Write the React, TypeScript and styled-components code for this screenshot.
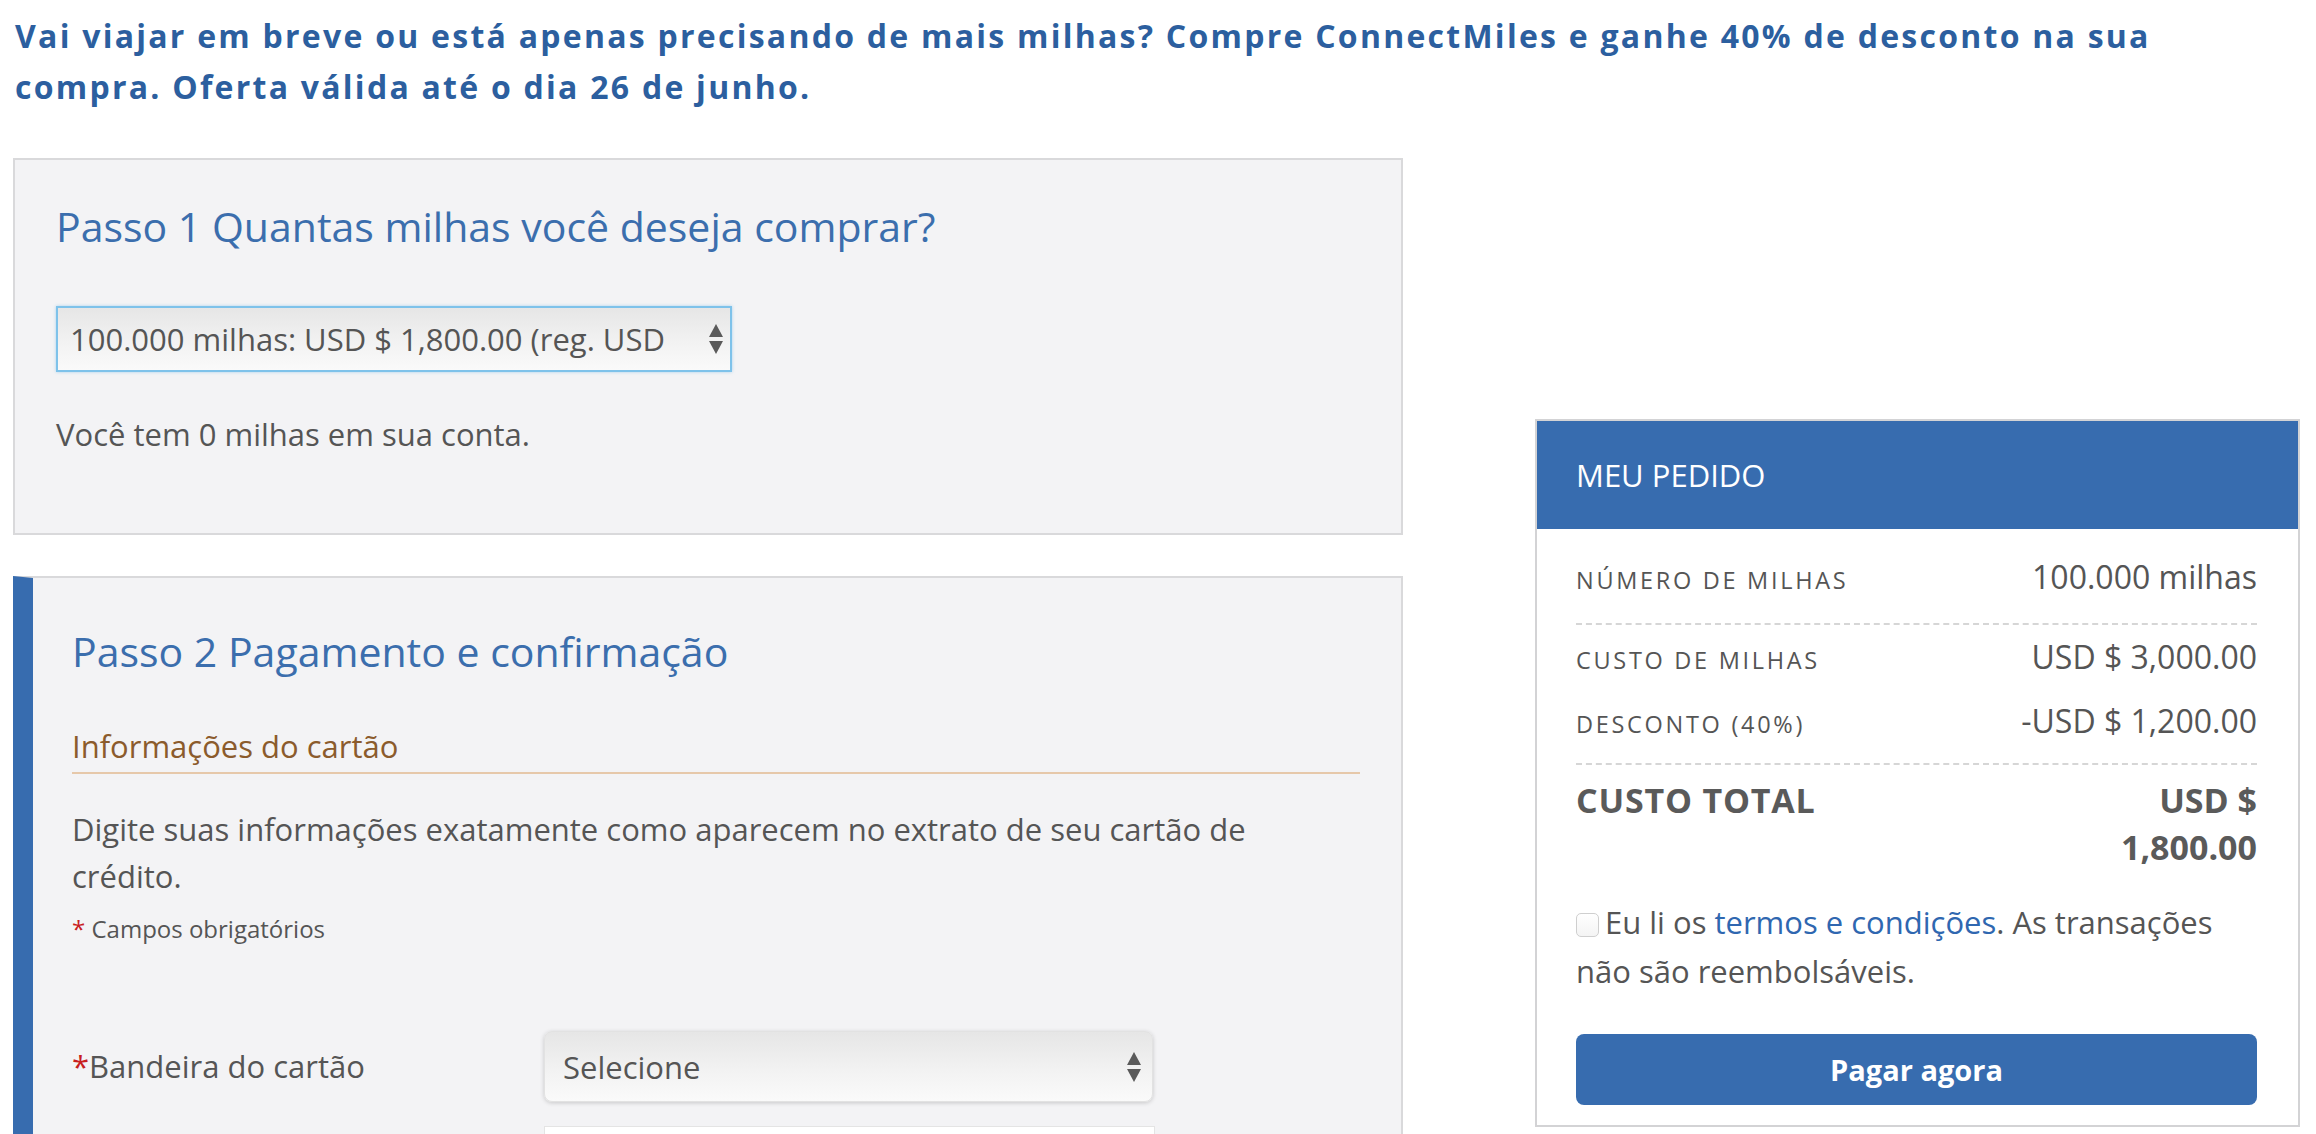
import React from "react";
import styled, { createGlobalStyle } from "styled-components";

const GlobalStyle = createGlobalStyle`
  html, body { margin: 0; padding: 0; background: #ffffff; }
  body { font-family: "Open Sans", "Liberation Sans", sans-serif; color: #555555; }
  * { box-sizing: border-box; }
`;

const Page = styled.div`
  padding: 10px 16px 0 13px;
  width: 2316px;
  height: 1134px;
  overflow: hidden;
`;

const Headline = styled.h1`
  margin: 0 0 0 2px;
  max-width: 2200px;
  font-size: 32px;
  font-weight: 700;
  line-height: 51px;
  letter-spacing: 2.25px;
  color: #2c5f9f;
`;

const Layout = styled.div`
  display: grid;
  grid-template-columns: 1390px 765px;
  column-gap: 132px;
  margin-top: 46px;
  align-items: start;
`;

const MainColumn = styled.div`
  display: flex;
  flex-direction: column;
  gap: 41px;
`;

const Panel = styled.section<{ $active?: boolean }>`
  background: #f3f3f5;
  border: 2px solid #d9d9db;
  border-left: ${(p) => (p.$active ? "20px solid #376caf" : "2px solid #d9d9db")};
  padding: ${(p) => (p.$active ? "45px 41px 0 39px" : "38px 41px 77px 41px")};
  ${(p) => (p.$active ? "min-height: 700px;" : "")}
`;

const StepTitle = styled.h2`
  margin: 0;
  font-size: 41px;
  font-weight: 400;
  line-height: 56px;
  color: #3b6ead;
`;

const SelectShell = styled.div<{ $focused?: boolean; $width: number; $height: number }>`
  display: flex;
  align-items: center;
  justify-content: space-between;
  width: ${(p) => p.$width}px;
  height: ${(p) => p.$height}px;
  padding: ${(p) => (p.$focused ? "0 6px 0 12px" : "0 10px 0 18px")};
  background: linear-gradient(#e6e6e6, #f3f3f3 60%, #fafafa);
  border: ${(p) => (p.$focused ? "2px solid #7ec2ea" : "1px solid #e2e2e2")};
  border-radius: ${(p) => (p.$focused ? "0" : "8px")};
  box-shadow: ${(p) => (p.$focused ? "0 0 3px rgba(120, 190, 235, 0.6)" : "0 1px 4px rgba(0,0,0,0.18)")};
`;

const SelectText = styled.span`
  font-size: 31px;
  color: #555555;
  white-space: nowrap;
  overflow: hidden;
`;

const SelectArrows = () => (
  <svg width="16" height="32" viewBox="0 0 16 32">
    <polygon points="8,1 15,14 1,14" fill="#5a5a5a" />
    <polygon points="1,18 15,18 8,31" fill="#5a5a5a" />
  </svg>
);

const Step1Select = styled(SelectShell)`
  margin-top: 52px;
`;

const Balance = styled.p`
  margin: 40px 0 0;
  font-size: 31px;
  line-height: 44px;
  color: #555555;
`;

const SectionHeading = styled.h3`
  margin: 47px 0 0;
  padding-bottom: 6px;
  border-bottom: 2px solid #e6c8aa;
  font-size: 31px;
  font-weight: 400;
  line-height: 40px;
  color: #8b5b2c;
`;

const Intro = styled.p`
  margin: 32px 0 0;
  font-size: 31px;
  line-height: 47px;
  color: #555555;
`;

const Required = styled.p`
  margin: 14px 0 0;
  font-size: 24px;
  line-height: 30px;
  color: #555555;
`;

const Star = styled.span`
  color: #c8201e;
`;

const FormGrid = styled.div`
  display: grid;
  grid-template-columns: 472px 611px;
  row-gap: 24px;
  margin-top: 87px;
`;

const FieldLabel = styled.label`
  font-size: 31px;
  line-height: 71px;
  color: #555555;
`;

const WhiteInput = styled.div`
  grid-column: 2;
  width: 611px;
  height: 70px;
  background: #ffffff;
  border: 1px solid #e4e4e4;
`;

const Order = styled.aside`
  margin-top: 261px;
  border: 2px solid #d3d3d5;
  background: #ffffff;
`;

const OrderHeader = styled.div`
  display: flex;
  align-items: center;
  height: 108px;
  padding-left: 39px;
  background: #376caf;
  color: #ffffff;
  font-size: 31px;
`;

const OrderBody = styled.div`
  padding: 0 41px 20px 39px;
`;

const OrderRow = styled.div<{ $pt: number; $pb: number; $dashed?: boolean }>`
  display: flex;
  justify-content: space-between;
  align-items: baseline;
  padding: ${(p) => p.$pt}px 0 ${(p) => p.$pb}px;
  border-bottom: ${(p) => (p.$dashed ? "2px dashed #d6d6d6" : "none")};
`;

const RowLabel = styled.span`
  font-size: 23.5px;
  letter-spacing: 2.7px;
  color: #555555;
`;

const RowValue = styled.span`
  font-size: 32px;
  line-height: 40px;
  color: #555555;
  text-align: right;
`;

const TotalRow = styled.div`
  display: flex;
  justify-content: space-between;
  align-items: flex-start;
  padding-top: 12px;
  font-size: 34px;
  font-weight: 700;
  line-height: 47px;
  color: #5a5a5a;
`;

const TotalLabel = styled.span`
  letter-spacing: 0.8px;
`;

const TotalValue = styled.span`
  text-align: right;
  width: 200px;
`;

const Terms = styled.p`
  margin: 27px 0 0;
  font-size: 31px;
  line-height: 49px;
  color: #555555;
`;

const Check = styled.span`
  display: inline-block;
  width: 23px;
  height: 24px;
  margin-right: 6px;
  vertical-align: -3px;
  border: 1px solid #cfcfcf;
  border-radius: 5px;
  background: linear-gradient(#ffffff, #f4f4f4);
`;

const TermsLink = styled.a`
  color: #2f67b0;
  text-decoration: none;
`;

const PayButton = styled.button`
  display: block;
  width: 100%;
  height: 71px;
  margin-top: 38px;
  border: none;
  border-radius: 8px;
  background: #376caf;
  color: #ffffff;
  font-family: "Open Sans", "Liberation Sans", sans-serif;
  font-size: 29px;
  font-weight: 700;
`;

export default function App() {
  return (
    <>
      <GlobalStyle />
      <Page>
        <Headline>
          Vai viajar em breve ou está apenas precisando de mais milhas? Compre ConnectMiles e ganhe 40% de desconto na sua compra. Oferta válida até o dia 26 de junho.
        </Headline>
        <Layout>
          <MainColumn>
            <Panel>
              <StepTitle>Passo 1 Quantas milhas você deseja comprar?</StepTitle>
              <Step1Select $focused $width={676} $height={66}>
                <SelectText>100.000 milhas: USD $ 1,800.00 (reg. USD</SelectText>
                <SelectArrows />
              </Step1Select>
              <Balance>Você tem 0 milhas em sua conta.</Balance>
            </Panel>
            <Panel $active>
              <StepTitle>Passo 2 Pagamento e confirmação</StepTitle>
              <SectionHeading>Informações do cartão</SectionHeading>
              <Intro>
                Digite suas informações exatamente como aparecem no extrato de seu cartão de
                <br />
                crédito.
              </Intro>
              <Required>
                <Star>*</Star> Campos obrigatórios
              </Required>
              <FormGrid>
                <FieldLabel>
                  <Star>*</Star>Bandeira do cartão
                </FieldLabel>
                <SelectShell $width={609} $height={71}>
                  <SelectText>Selecione</SelectText>
                  <SelectArrows />
                </SelectShell>
                <WhiteInput />
              </FormGrid>
            </Panel>
          </MainColumn>
          <Order>
            <OrderHeader>MEU PEDIDO</OrderHeader>
            <OrderBody>
              <OrderRow $pt={28} $pb={26} $dashed>
                <RowLabel>NÚMERO DE MILHAS</RowLabel>
                <RowValue>100.000 milhas</RowValue>
              </OrderRow>
              <OrderRow $pt={12} $pb={0}>
                <RowLabel>CUSTO DE MILHAS</RowLabel>
                <RowValue>USD $ 3,000.00</RowValue>
              </OrderRow>
              <OrderRow $pt={24} $pb={22} $dashed>
                <RowLabel>DESCONTO (40%)</RowLabel>
                <RowValue>-USD $ 1,200.00</RowValue>
              </OrderRow>
              <TotalRow>
                <TotalLabel>CUSTO TOTAL</TotalLabel>
                <TotalValue>USD $ 1,800.00</TotalValue>
              </TotalRow>
              <Terms>
                <Check />
                Eu li os <TermsLink href="#">termos e condições</TermsLink>. As transações não são reembolsáveis.
              </Terms>
              <PayButton>Pagar agora</PayButton>
            </OrderBody>
          </Order>
        </Layout>
      </Page>
    </>
  );
}
